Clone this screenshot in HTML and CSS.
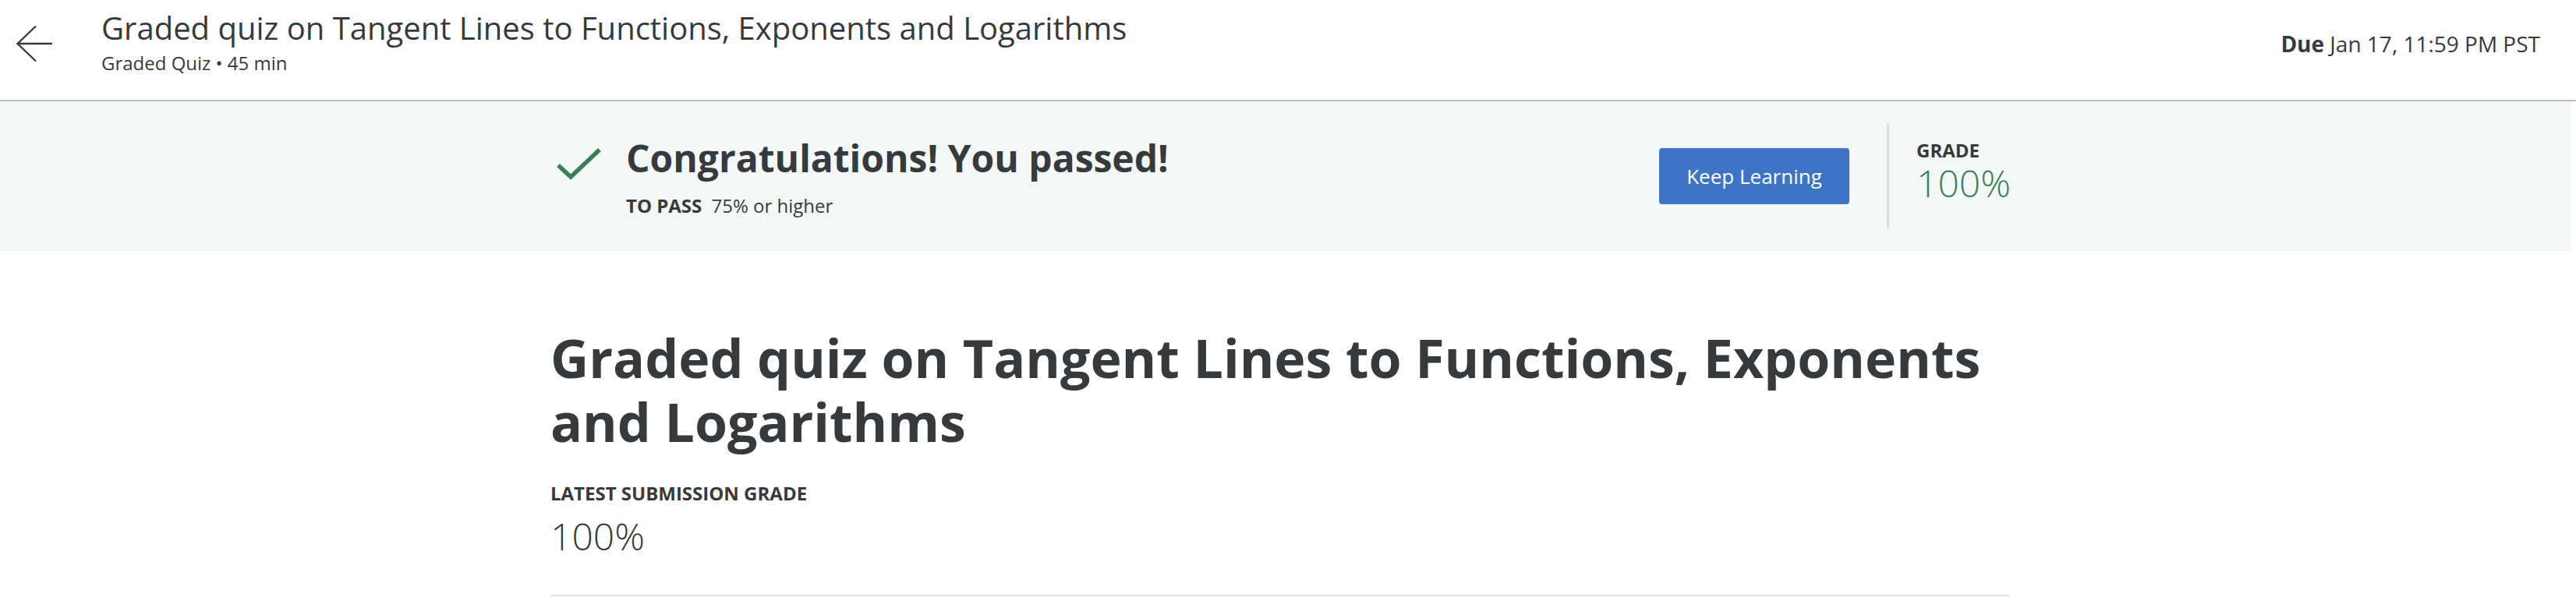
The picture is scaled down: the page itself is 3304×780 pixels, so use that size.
FILE: index.html
```html
<!DOCTYPE html>
<html lang="en">
<head>
<meta charset="utf-8">
<title>Graded quiz on Tangent Lines to Functions, Exponents and Logarithms</title>
<link rel="stylesheet" href="styles.css">
</head>
<body>
<header class="topbar">
  <a class="back" href="#" aria-label="Back">
    <svg width="50" height="48" viewBox="0 0 50 48" aria-hidden="true">
      <path d="M47 24H2.5M26 1.5L2.5 24L26 46.5" fill="none" stroke="#3c3c3c" stroke-width="2.4"/>
    </svg>
  </a>
  <div class="topbar-titles">
    <div class="topbar-title">Graded quiz on Tangent Lines to Functions, Exponents and Logarithms</div>
    <div class="topbar-sub">Graded Quiz • 45 min</div>
  </div>
  <div class="due"><strong>Due</strong> Jan 17, 11:59 PM PST</div>
</header>

<section class="banner">
  <div class="container banner-row">
    <div class="pass">
      <svg class="check" width="58" height="44" viewBox="0 0 58 44" aria-hidden="true">
        <path d="M2 23L18 38L55 3" fill="none" stroke="#3b7f56" stroke-width="5.5"/>
      </svg>
      <div class="pass-text">
        <h2 class="congrats">Congratulations! You passed!</h2>
        <div class="to-pass"><span class="label">TO PASS</span> 75% or higher</div>
      </div>
    </div>
    <button class="keep">Keep Learning</button>
    <div class="divider"></div>
    <div class="grade">
      <div class="grade-label">GRADE</div>
      <div class="grade-value">100%</div>
    </div>
  </div>
</section>

<main class="container content">
  <h1 class="quiz-title">Graded quiz on Tangent Lines to Functions, Exponents and Logarithms</h1>
  <div class="latest-label">LATEST SUBMISSION GRADE</div>
  <div class="latest-value">100%</div>
  <hr class="rule">
</main>
</body>
</html>
```

FILE: styles.css
```css
* { box-sizing: border-box; }

html, body {
  margin: 0;
  padding: 0;
  background: #ffffff;
}

body {
  font-family: "Open Sans", "Noto Sans", "Liberation Sans", sans-serif;
  color: #373a3c;
}

.topbar {
  height: 130px;
  display: flex;
  align-items: flex-start;
  border-bottom: 2px solid #bdbdbd;
}

.back {
  display: block;
  margin: 32px 0 0 20px;
  width: 50px;
  height: 48px;
}

.back svg { display: block; }

.topbar-titles {
  margin-left: 60px;
  padding-top: 12px;
  flex: 1;
}

.topbar-title {
  font-size: 40px;
  line-height: 48px;
  font-weight: 400;
}

.topbar-sub {
  margin-top: 7px;
  font-size: 24px;
  line-height: 28px;
}

.due {
  padding-top: 38px;
  padding-right: 46px;
  font-size: 28px;
  line-height: 36px;
}

.due strong { font-weight: 700; }

.banner {
  background: #f3f8f6;
  margin-right: 6px;
  height: 192px;
  padding-top: 28px;
}

.container {
  width: 1872px;
  margin-left: 706px;
}

.banner-row {
  display: flex;
  align-items: center;
  height: 135px;
}

.pass {
  display: flex;
  align-items: flex-start;
  align-self: flex-start;
  flex: 1;
  padding-top: 15px;
}

.check {
  display: block;
  margin: 16px 0 0 8px;
}

.pass-text { margin-left: 31px; }

.congrats {
  margin: 0;
  font-size: 48px;
  line-height: 60px;
  font-weight: 700;
}

.to-pass {
  margin-top: 16px;
  font-size: 24px;
  line-height: 30px;
}

.to-pass .label {
  font-weight: 700;
  margin-right: 6px;
}

.keep {
  width: 244px;
  height: 72px;
  border: 0;
  border-radius: 4px;
  background: #3d74c6;
  color: #ffffff;
  font-family: inherit;
  font-size: 26px;
  font-weight: 400;
}

.divider {
  width: 3px;
  height: 135px;
  background: #dddddd;
  margin-left: 48px;
}

.grade {
  width: 120px;
  margin-left: 35px;
  align-self: flex-start;
  padding-top: 21px;
}

.grade-label {
  font-size: 24px;
  line-height: 28px;
  font-weight: 700;
}

.grade-value {
  font-size: 48px;
  line-height: 56px;
  font-weight: 300;
  color: #3b7f56;
}

.content { padding-top: 96px; }

.quiz-title {
  margin: 0;
  font-size: 68px;
  line-height: 82px;
  font-weight: 700;
}

.latest-label {
  margin-top: 37px;
  font-size: 24px;
  line-height: 28px;
  font-weight: 700;
}

.latest-value {
  margin-top: 13px;
  font-size: 48px;
  line-height: 56px;
  font-weight: 300;
}

.rule {
  margin: 47px 0 0;
  border: 0;
  height: 2px;
  background: #e2e2e2;
}
```
